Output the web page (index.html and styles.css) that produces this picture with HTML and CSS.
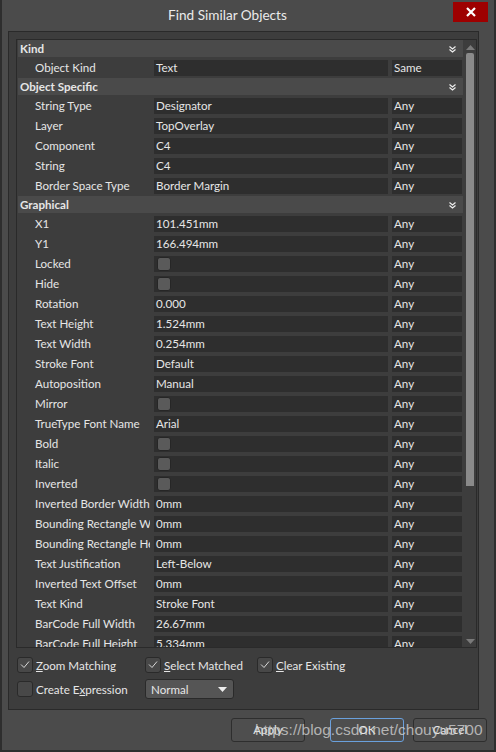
FILE: index.html
```html
<!DOCTYPE html>
<html lang="en">
<head>
    <meta charset="UTF-8">
    <title>Find Similar Objects</title>
    <link rel="stylesheet" href="styles.css">
</head>
<body>
<div class="window">
    <div class="titlebar">
        <div class="title">Find Similar Objects</div>
        <div class="close">
            <svg width="12" height="12" viewBox="0 0 12 12"><path d="M2 2 L10 10 M10 2 L2 10" stroke="#fff" stroke-width="2.2"/></svg>
        </div>
    </div>

    <div class="panel">
        <div class="grid">
            <div class="list">
                <div class="head">Kind<svg class="chev" width="7" height="7" viewBox="0 0 7 7"><path d="M0.5 0.5 L3.5 3 L6.5 0.5 M0.5 3.5 L3.5 6 L6.5 3.5" stroke="#eee" stroke-width="1.2" fill="none"/></svg></div>
                <div class="row"><span class="name">Object Kind</span><span class="val">Text</span><span class="mode">Same</span></div>

                <div class="head">Object Specific<svg class="chev" width="7" height="7" viewBox="0 0 7 7"><path d="M0.5 0.5 L3.5 3 L6.5 0.5 M0.5 3.5 L3.5 6 L6.5 3.5" stroke="#eee" stroke-width="1.2" fill="none"/></svg></div>
                <div class="row"><span class="name">String Type</span><span class="val">Designator</span><span class="mode">Any</span></div>
                <div class="row"><span class="name">Layer</span><span class="val">TopOverlay</span><span class="mode">Any</span></div>
                <div class="row"><span class="name">Component</span><span class="val">C4</span><span class="mode">Any</span></div>
                <div class="row"><span class="name">String</span><span class="val">C4</span><span class="mode">Any</span></div>
                <div class="row"><span class="name">Border Space Type</span><span class="val">Border Margin</span><span class="mode">Any</span></div>

                <div class="head">Graphical<svg class="chev" width="7" height="7" viewBox="0 0 7 7"><path d="M0.5 0.5 L3.5 3 L6.5 0.5 M0.5 3.5 L3.5 6 L6.5 3.5" stroke="#eee" stroke-width="1.2" fill="none"/></svg></div>
                <div class="row"><span class="name">X1</span><span class="val">101.451mm</span><span class="mode">Any</span></div>
                <div class="row"><span class="name">Y1</span><span class="val">166.494mm</span><span class="mode">Any</span></div>
                <div class="row"><span class="name">Locked</span><span class="val"><i class="box"></i></span><span class="mode">Any</span></div>
                <div class="row"><span class="name">Hide</span><span class="val"><i class="box"></i></span><span class="mode">Any</span></div>
                <div class="row"><span class="name">Rotation</span><span class="val">0.000</span><span class="mode">Any</span></div>
                <div class="row"><span class="name">Text Height</span><span class="val">1.524mm</span><span class="mode">Any</span></div>
                <div class="row"><span class="name">Text Width</span><span class="val">0.254mm</span><span class="mode">Any</span></div>
                <div class="row"><span class="name">Stroke Font</span><span class="val">Default</span><span class="mode">Any</span></div>
                <div class="row"><span class="name">Autoposition</span><span class="val">Manual</span><span class="mode">Any</span></div>
                <div class="row"><span class="name">Mirror</span><span class="val"><i class="box"></i></span><span class="mode">Any</span></div>
                <div class="row"><span class="name">TrueType Font Name</span><span class="val">Arial</span><span class="mode">Any</span></div>
                <div class="row"><span class="name">Bold</span><span class="val"><i class="box"></i></span><span class="mode">Any</span></div>
                <div class="row"><span class="name">Italic</span><span class="val"><i class="box"></i></span><span class="mode">Any</span></div>
                <div class="row"><span class="name">Inverted</span><span class="val"><i class="box"></i></span><span class="mode">Any</span></div>
                <div class="row"><span class="name">Inverted Border Width</span><span class="val">0mm</span><span class="mode">Any</span></div>
                <div class="row"><span class="name">Bounding Rectangle Width</span><span class="val">0mm</span><span class="mode">Any</span></div>
                <div class="row"><span class="name">Bounding Rectangle Height</span><span class="val">0mm</span><span class="mode">Any</span></div>
                <div class="row"><span class="name">Text Justification</span><span class="val">Left-Below</span><span class="mode">Any</span></div>
                <div class="row"><span class="name">Inverted Text Offset</span><span class="val">0mm</span><span class="mode">Any</span></div>
                <div class="row"><span class="name">Text Kind</span><span class="val">Stroke Font</span><span class="mode">Any</span></div>
                <div class="row"><span class="name">BarCode Full Width</span><span class="val">26.67mm</span><span class="mode">Any</span></div>
                <div class="row"><span class="name">BarCode Full Height</span><span class="val">5.334mm</span><span class="mode">Any</span></div>
            </div>
            <div class="scroll">
                <svg width="9" height="5" viewBox="0 0 9 5"><path d="M0 5 L4.5 0 L9 5 Z" fill="#7a7a7a"/></svg>
                <div class="thumb"></div>
                <div class="track"></div>
                <svg width="9" height="5" viewBox="0 0 9 5"><path d="M0 0 L4.5 5 L9 0 Z" fill="#7a7a7a"/></svg>
            </div>
        </div>

        <div class="options">
            <div class="opt-row">
                <label class="check w-first"><i class="cbox on"><svg width="14" height="14" viewBox="0 0 14 14"><path d="M3 6.5 L6 9.5 L11 3.5" stroke="#d8d8d8" stroke-width="1" fill="none"/></svg></i><span><u>Z</u>oom Matching</span></label>
                <label class="check w-second"><i class="cbox on"><svg width="14" height="14" viewBox="0 0 14 14"><path d="M3 6.5 L6 9.5 L11 3.5" stroke="#d8d8d8" stroke-width="1" fill="none"/></svg></i><span><u>S</u>elect Matched</span></label>
                <label class="check"><i class="cbox on"><svg width="14" height="14" viewBox="0 0 14 14"><path d="M3 6.5 L6 9.5 L11 3.5" stroke="#d8d8d8" stroke-width="1" fill="none"/></svg></i><span><u>C</u>lear Existing</span></label>
            </div>
            <div class="opt-row">
                <label class="check w-first"><i class="cbox"></i><span>Create E<u>x</u>pression</span></label>
                <div class="select">Normal<svg width="9" height="5" viewBox="0 0 9 5"><path d="M0 0 L4.5 5 L9 0 Z" fill="#eee"/></svg></div>
            </div>
        </div>
    </div>

    <div class="buttons">
        <div class="btn">Apply</div>
        <div class="btn default">OK</div>
        <div class="btn">Cancel</div>
    </div>

    <div class="watermark">https://blog.csdn.net/chouyu5700</div>
</div>
</body>
</html>
```

FILE: styles.css
```css
* {
    box-sizing: border-box;
}
body {
    margin: 0;
    background: #4b4b4b;
    font-family: Lato, "Noto Sans", sans-serif;
    font-size: 11.6px;
    color: #e6e6e6;
}

.window {
    position: relative;
    width: 496px;
    height: 752px;
    background: #4b4b4b;
    border-left: 2px solid #2e2e2e;
    border-right: 2px solid #2e2e2e;
    border-bottom: 2px solid #2e2e2e;
    display: flex;
    flex-direction: column;
}

.titlebar {
    height: 31px;
    display: flex;
    align-items: flex-start;
}
.title {
    flex: 1;
    text-align: center;
    font-size: 13.6px;
    line-height: 30px;
    color: #eaeaea;
}
.close {
    width: 35px;
    height: 20px;
    margin: 2px 6px 0 0;
    background: #9e0000;
    display: flex;
    align-items: center;
    justify-content: center;
}

.panel {
    margin: 0 15px 0 6px;
    height: 679px;
    border: 1px solid #2a2a2a;
    background: #3d3d3d;
    padding: 7px 1px 0 7px;
    display: flex;
    flex-direction: column;
}

.grid {
    height: 609px;
    border: 1px solid #2a2a2a;
    display: flex;
    padding-left: 1px;
}
.list {
    width: 446px;
    overflow: hidden;
}
.head {
    height: 17px;
    margin-bottom: 1px;
    background: #4a4a4a;
    font-weight: bold;
    line-height: 17px;
    padding: 0 7px 0 2px;
    display: flex;
    align-items: center;
    justify-content: space-between;
}
.chev {
    margin-top: 1px;
}
.row {
    height: 20px;
    display: grid;
    grid-template-columns: 132px 234px 70px;
    column-gap: 4px;
    align-items: center;
    padding: 2px 0;
}
.name {
    padding-left: 17px;
    white-space: nowrap;
    overflow: hidden;
    line-height: 16px;
}
.val,
.mode {
    height: 16px;
    line-height: 16px;
    background: #2e2e2e;
    padding-left: 2px;
    display: flex;
    align-items: center;
}
.box {
    width: 14px;
    height: 14px;
    margin-left: 1px;
    border: 1px solid #262626;
    border-radius: 3px;
    background: #5a5a5a;
}

.scroll {
    width: 12px;
    margin-left: 1px;
    display: flex;
    flex-direction: column;
    align-items: center;
    padding: 5px 0 3px;
}
.thumb {
    width: 8px;
    height: 433px;
    margin-top: 3px;
    background: #8a8a8a;
    border-radius: 2px 2px 0 0;
}
.track {
    flex: 1;
}

.options {
    padding: 9px 0 0 1px;
    display: flex;
    flex-direction: column;
    gap: 6px;
}
.opt-row {
    display: flex;
    align-items: center;
}
.check {
    display: flex;
    align-items: center;
    gap: 3px;
}
.w-first {
    width: 128px;
}
.w-second {
    width: 112px;
}
.cbox {
    width: 16px;
    height: 16px;
    border: 1px solid #2a2a2a;
    border-radius: 3px;
    background: #484848;
    display: flex;
    align-items: center;
    justify-content: center;
}
.select {
    width: 89px;
    height: 20px;
    border: 1px solid #2a2a2a;
    border-radius: 3px;
    background: #555;
    padding: 0 6px 0 5px;
    display: flex;
    align-items: center;
    justify-content: space-between;
}

.buttons {
    display: flex;
    justify-content: flex-end;
    gap: 9px;
    padding: 8px 7px 0 0;
}
.btn {
    width: 74px;
    height: 24px;
    border: 1px solid #2e2e2e;
    border-radius: 3px;
    background: #4e4e4e;
    text-align: center;
    line-height: 22px;
}
.btn:first-child {
    margin-right: 16px;
}
.btn.default {
    border-color: #6aa0dc;
}

.watermark {
    position: absolute;
    left: 253px;
    top: 721px;
    font-family: "Liberation Sans", Arial, sans-serif;
    font-size: 15.5px;
    color: rgba(215, 215, 215, 0.75);
    white-space: nowrap;
}
```
